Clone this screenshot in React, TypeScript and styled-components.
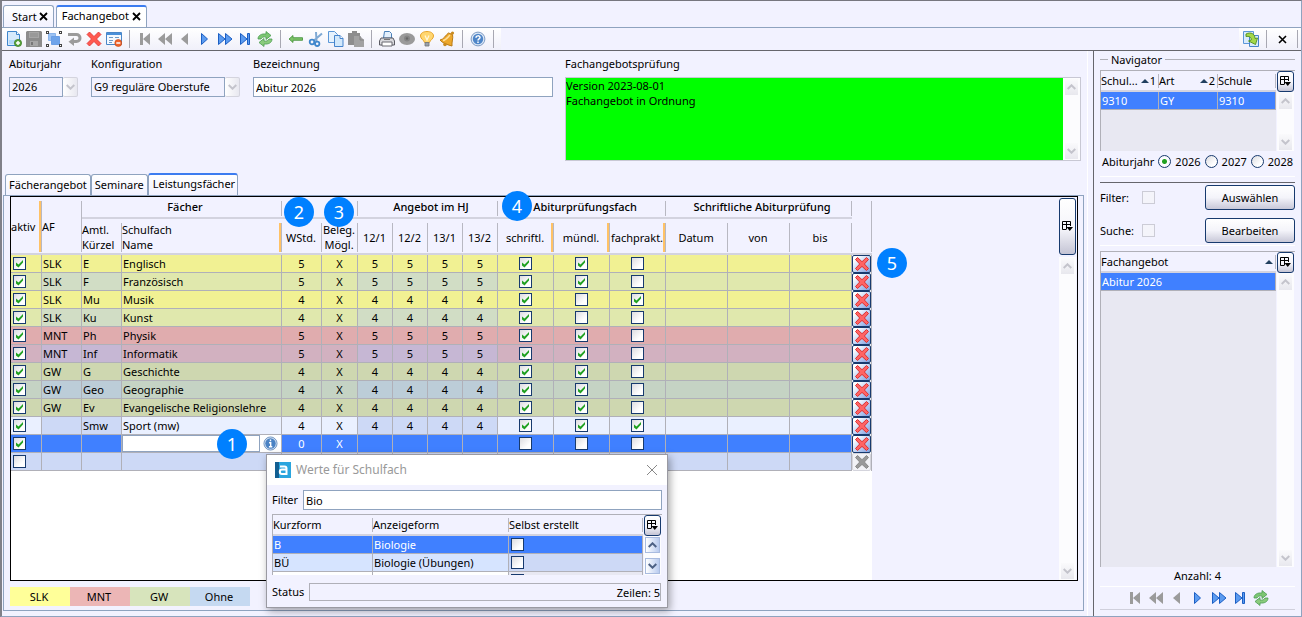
import React from "react";
import styled, { createGlobalStyle, css } from "styled-components";

const Global = createGlobalStyle`
  *, *::before, *::after { box-sizing: border-box; }
  body {
    margin: 0;
    background: #f2f2ff;
    color: #000;
    font: 11px/16px "Noto Sans", "Open Sans", sans-serif;
  }
  button, input, select, textarea { font: inherit; color: inherit; margin: 0; }
  svg { display: block; }
`;

const LINE = "#b0b0b8";
const STEEL = "#8fa3bf";
const NAVY = "#173a6e";
const SELECT = "#4080ff";

/* ---------- page frame ---------- */
const Page = styled.div`
  min-height: 100vh;
  display: flex;
  flex-direction: column;
  border: 1px solid ${STEEL};
  border-top-color: #77777f;
  border-left: 2px solid #808088;
  background: #f2f2ff;
`;
const TabBar = styled.nav`
  display: flex;
  align-items: flex-end;
  gap: 2px;
  height: 27px;
  padding-left: 1px;
  border-bottom: 1px solid ${STEEL};
`;
const Tab = styled.div<{ $active?: boolean }>`
  display: flex;
  align-items: center;
  gap: 2px;
  height: 22px;
  padding: 0 5px 0 8px;
  border: 1px solid ${STEEL};
  border-bottom: 0;
  border-radius: 3px 3px 0 0;
  background: linear-gradient(#fff, #f2f2ff);
  ${(p) =>
    p.$active &&
    css`
      gap: 3px;
      padding: 0 5px 2px 5px;
      border-top: 2px solid #3c7cf0;
      background: #fff;
    `}
`;
const PlainButton = styled.button`
  display: flex;
  align-items: center;
  justify-content: center;
  padding: 0;
  border: 0;
  background: none;
`;
const Toolbar = styled.div`
  display: flex;
  justify-content: space-between;
  height: 23px;
  border-bottom: 1px solid #66666c;
`;
const ToolGroup = styled.div<{ $end?: boolean }>`
  display: flex;
  align-items: center;
  gap: 4px;
  padding: ${(p) => (p.$end ? "0 0 0 4px" : "0 4px")};
  background: linear-gradient(#fff, #f0f0fa);
`;
const ToolButton = styled(PlainButton)`
  width: 16px;
  height: 16px;
`;
const Separator = styled.span`
  width: 1px;
  height: 18px;
  margin: 0 3px 0 3px;
  background: #a8a8b2;
`;
const Body = styled.div`
  flex: 1;
  display: flex;
  gap: 5px;
`;
const Main = styled.main`
  flex: 1;
  min-width: 0;
  display: flex;
  flex-direction: column;
  padding-bottom: 5px;
  border-right: 1px solid #fff;
`;

/* ---------- form ---------- */
const Form = styled.div`
  display: grid;
  grid-template-columns: 70px 150px 300px 1fr;
  gap: 12px;
  padding: 4px 6px 12px 7px;
`;
const Field = styled.div`
  display: flex;
  flex-direction: column;
  align-items: stretch;
  gap: 4px;
`;
const FieldLabel = styled.label`
  line-height: 18px;
`;
const inputLook = css`
  height: 20px;
  padding: 0 2px;
  border: 1px solid ${STEEL};
  border-radius: 0;
  background: #fff;
  outline: 0;
`;
const TextInput = styled.input`
  ${inputLook}
  width: 100%;
  min-width: 0;
`;
const ComboRow = styled.div`
  display: flex;
  padding-right: 1px;
`;
const Combo = styled.select`
  ${inputLook}
  flex: 1;
  min-width: 0;
  appearance: none;
  background: #f2f2ff;
  opacity: 1;
  &:disabled { color: #000; opacity: 1; }
`;
const ComboArrow = styled.span`
  display: grid;
  place-items: center;
  width: 15px;
  height: 20px;
  border: 1px solid #d4d4de;
  border-left: 0;
  border-radius: 2px;
  background: linear-gradient(90deg, #fff, #e8e8f0);
`;
const ReportBox = styled.div`
  display: flex;
  height: 84px;
  border: 1px solid #c8c8d4;
`;
const Report = styled.textarea`
  flex: 1;
  min-width: 0;
  padding: 0;
  border: 0;
  outline: 0;
  resize: none;
  overflow: hidden;
  background: #00ff00;
  line-height: 15px;
`;

/* ---------- scrollbars ---------- */
const ScrollTrack = styled.div<{ $live?: boolean }>`
  flex: none;
  display: flex;
  flex-direction: column;
  justify-content: space-between;
  width: 17px;
  padding: 1px 2px;
  background: #fcfcfe;
  button {
    width: 13px;
    height: 16px;
    background: linear-gradient(#fafafc, #e8e8ee);
  }
  ${(p) =>
    p.$live &&
    css`
      padding: 1px 1px;
      button {
        width: 15px;
        border: 1px solid #a9bbdf;
        background: linear-gradient(90deg, #fff, #b9cbef);
      }
    `}
`;

/* ---------- inner tab panel ---------- */
const InnerTabs = styled(TabBar)`
  height: 23px;
  border-bottom: 0;
  gap: 0;
  margin-bottom: -1px;
  padding-left: 3px;
`;
const InnerTab = styled.button<{ $active?: boolean }>`
  height: 22px;
  padding: 0 3px;
  border: 1px solid ${STEEL};
  border-bottom-color: transparent;
  border-radius: 3px 3px 0 0;
  background: linear-gradient(#fff, #f2f2ff);
  ${(p) =>
    p.$active &&
    css`
      height: 23px;
      padding: 0 2px 2px 4px;
      border-top: 2px solid #3c7cf0;
    `}
`;
const TabPanel = styled.section`
  flex: 1;
  display: flex;
  flex-direction: column;
  gap: 6px;
  margin: 0 3px 0 1px;
  padding: 0 5px 4px 6px;
  border: 1px solid ${STEEL};
`;
const Frame = styled.div`
  position: relative;
  flex: 1;
  display: flex;
  border: 1px solid #000;
`;
const Viewport = styled.div`
  flex: none;
  background: linear-gradient(#f2f2ff, #f2f2ff) 0 0 / 100% 58px no-repeat #fff;
`;
const ScrollSide = styled.div`
  display: flex;
  flex-direction: column;
  align-items: flex-start;
  margin-left: auto;
  padding-top: 1px;
  width: 18px;
  ${ScrollTrack} { flex: 1; margin-top: 2px; }
`;
const ColumnButton = styled(PlainButton)`
  width: 17px;
  height: 21px;
  border: 1px solid ${NAVY};
  border-radius: 3px;
  background: linear-gradient(#fff, #f4f4fa 55%, #c4c4d4);
`;
const TallColumnButton = styled(ColumnButton)`
  height: 57px;
`;

/* ---------- tables ---------- */
const Grid = styled.table`
  table-layout: fixed;
  width: 861px;
  border-collapse: separate;
  border-spacing: 0;
`;
const Th = styled.th<{ $left?: boolean; $mark?: boolean; $top?: boolean; $plain?: boolean }>`
  height: 36px;
  padding: 2px 2px 0 0;
  font-weight: 400;
  line-height: 15px;
  white-space: nowrap;
  text-align: ${(p) => (p.$left ? "left" : "center")};
  border-bottom: 2px solid #d3d3df;
  background-color: #f2f2ff;
  background-image: linear-gradient(#b8b8c2, #b8b8c2),
    linear-gradient(${(p) => (p.$mark ? "#ffc266, #ffc266" : "transparent, transparent")});
  background-size: 1px calc(100% - 5px), 2px calc(100% - 5px);
  background-position: right 0 top 4px, right 1px top 4px;
  background-repeat: no-repeat;
  ${(p) =>
    p.$top &&
    css`
      height: 22px;
      padding: 0 0 1px 6px;
      font-weight: 500;
    `}
`;
const Td = styled.td<{ $bg: string; $center?: boolean; $light?: boolean }>`
  height: 18px;
  padding: 0 1px;
  overflow: hidden;
  line-height: 16px;
  white-space: nowrap;
  text-align: ${(p) => (p.$center ? "center" : "left")};
  color: ${(p) => (p.$light ? "#fff" : "#000")};
  background: ${(p) => p.$bg};
  border-right: 1px solid ${LINE};
  border-bottom: 1px solid ${LINE};
`;
const DeleteCell = styled.td`
  height: 18px;
  padding: 0;
  border-right: 1px solid ${LINE};
`;
const DeleteButton = styled(PlainButton)`
  width: 19px;
  height: 18px;
  border: 1px solid ${NAVY};
  border-radius: 2px;
  background: linear-gradient(135deg, #fff 15%, #b8ccf2 60%, #7f9fdc);
  &:disabled {
    border-color: #d4d4dc;
    background: #f2f2f6;
  }
`;
const EditRow = styled.div`
  display: flex;
  align-items: center;
  margin: 0 -1px;
  background: #fff;
`;
const CellInput = styled.input`
  width: 138px;
  height: 17px;
  padding: 0 2px;
  border: 1px solid ${STEEL};
  background: #fff;
  color: #000;
  outline: 0;
`;
const InfoButton = styled(PlainButton)`
  width: 21px;
  height: 17px;
`;

/* ---------- check boxes and radios ---------- */
const CheckBox = styled.span<{ $center?: boolean }>`
  display: grid;
  width: 13px;
  height: 13px;
  margin: ${(p) => (p.$center ? "0 auto" : "0 0 0 1px")};
  > * { grid-area: 1 / 1; }
  svg { pointer-events: none; }
`;
const CheckInput = styled.input`
  appearance: none;
  width: 13px;
  height: 13px;
  border: 1px solid ${NAVY};
  background: linear-gradient(135deg, #dcdce0, #fff 70%);
  &:disabled { border-color: #ccccd6; background: #f4f4fa; }
`;
const RadioInput = styled.input`
  appearance: none;
  width: 13px;
  height: 13px;
  border: 1px solid ${NAVY};
  border-radius: 50%;
  background: linear-gradient(135deg, #dcdce0, #fff 70%);
  &:checked { background: radial-gradient(circle, #21a121 0 2px, #fff 3px, #f2f2f6); }
`;

/* ---------- legend and badges ---------- */
const Legend = styled.div`
  display: flex;
`;
const LegendItem = styled.span<{ $bg: string }>`
  width: 60px;
  padding-right: 2px;
  line-height: 19px;
  text-align: center;
  background: ${(p) => p.$bg};
`;
const Badge = styled.span<{ $x: number; $y: number }>`
  position: absolute;
  left: ${(p) => p.$x}px;
  top: ${(p) => p.$y}px;
  width: 30px;
  height: 30px;
  border-radius: 50%;
  background: #0080ff;
  color: #fff;
  font-size: 18px;
  line-height: 30px;
  text-align: center;
`;

/* ---------- dialog ---------- */
const Dialog = styled.div`
  position: absolute;
  left: 255px;
  top: 257px;
  width: 402px;
  border: 1px solid #9a9aa2;
  background: #f2f2ff;
  box-shadow: 2px 3px 8px rgba(0, 0, 0, 0.35);
`;
const DialogTitle = styled.header`
  display: flex;
  align-items: center;
  gap: 5px;
  height: 30px;
  padding: 0 9px 0 8px;
  background: #fff;
  color: #999;
  font-size: 12px;
  button { margin-left: auto; }
`;
const DialogBody = styled.div`
  display: flex;
  flex-direction: column;
  gap: 4px;
  padding: 5px 5px 6px;
`;
const DialogRow = styled.div<{ $last?: boolean }>`
  display: flex;
  align-items: center;
  gap: 5px;
  padding: ${(p) => (p.$last ? "4px 1px 0 0" : "0")};
`;
const StatusBox = styled.output`
  flex: 1;
  height: 18px;
  line-height: 18px;
  border: 1px solid ${LINE};
  text-align: right;
`;
const ListBox = styled.div<{ $height?: number; $bg?: string; $grow?: boolean }>`
  display: flex;
  overflow: hidden;
  height: ${(p) => (p.$height ? p.$height + "px" : "auto")};
  flex: ${(p) => (p.$grow ? "1" : "none")};
  border-top: 1px solid ${LINE};
  border-left: 1px solid ${LINE};
`;
const ListArea = styled.div<{ $bg?: string }>`
  flex: 1;
  min-width: 0;
  background: ${(p) => p.$bg ?? "#fff"};
`;
const ListSide = styled.div`
  display: flex;
  flex-direction: column;
  align-items: center;
  width: 19px;
  ${ScrollTrack} { flex: 1; }
`;
const List = styled.table`
  width: 100%;
  table-layout: fixed;
  border-collapse: separate;
  border-spacing: 0;
`;
const ListHead = styled.th`
  height: 21px;
  padding: 0;
  font-weight: 400;
  text-align: left;
  white-space: nowrap;
  border-bottom: 2px solid #d3d3df;
  background: linear-gradient(#b8b8c2, #b8b8c2) right 0 top 3px / 1px 14px no-repeat #f2f2ff;
`;
const HeadSort = styled.span`
  display: flex;
  align-items: center;
  justify-content: space-between;
  padding-right: 3px;
  span { display: flex; align-items: center; gap: 1px; }
`;

/* ---------- navigator ---------- */
const Nav = styled.aside`
  flex: none;
  width: 208px;
  display: flex;
  flex-direction: column;
  padding: 0 6px 6px 6px;
  border-left: 1px solid #66666c;
`;
const NavTitle = styled.h2`
  display: flex;
  align-items: center;
  gap: 3px;
  margin: 0 0 2px;
  font: inherit;
  line-height: 17px;
  &::before, &::after { content: ""; height: 1px; background: ${LINE}; }
  &::before { width: 8px; }
  &::after { flex: 1; }
`;
const RadioRow = styled.div`
  display: flex;
  align-items: center;
  justify-content: space-between;
  height: 26px;
  padding: 0 2px 4px 2px;
  border-bottom: 1px solid #fff;
  label { display: flex; align-items: center; gap: 4px; }
`;
const FilterBlock = styled.div`
  display: flex;
  flex-direction: column;
  gap: 8px;
  margin: 5px 0;
  padding: 2px 0 2px;
  border-top: 1px solid #66666c;
  border-bottom: 1px solid #fff;
`;
const FilterRow = styled.div`
  display: grid;
  grid-template-columns: 41px 1fr 90px;
  align-items: center;
`;
const ActionButton = styled.button`
  height: 25px;
  padding: 0;
  border: 1px solid ${NAVY};
  border-radius: 3px;
  background: linear-gradient(#fff, #f4f4fa 50%, #c8c8d8);
`;
const Count = styled.p`
  margin: 0;
  padding: 1px 0 2px;
  border-bottom: 1px solid #fff;
  text-align: center;
`;
const Pager = styled.div`
  display: flex;
  justify-content: center;
  align-items: center;
  gap: 5px;
  height: 23px;
  border-bottom: 1px solid #d0d0dc;
`;

/* ---------- icons ---------- */
const Chevron = ({ up, color = "#c4c4cc" }: { up?: boolean; color?: string }) => (
  <svg width="9" height="6" viewBox="0 0 9 6">
    <path d={up ? "M0.7 5 4.5 1.3 8.3 5" : "M0.7 1 4.5 4.7 8.3 1"} fill="none" stroke={color} strokeWidth="2" />
  </svg>
);
const SortUp = () => (
  <svg width="8" height="4" viewBox="0 0 8 4"><path d="M0 4 4 0 8 4z" fill="#22405f" /></svg>
);
const CrossIcon = ({ thin }: { thin?: boolean }) => (
  <svg width="9" height="9" viewBox="0 0 9 9">
    <path d="M1 1 8 8M8 1 1 8" stroke="#000" strokeWidth={thin ? 1.6 : 1.8} />
  </svg>
);
const TableMenuIcon = () => (
  <svg width="11" height="11" viewBox="0 0 11 11">
    <path d="M8.500 5V.5H.5v8H4M.5 3.500H8.500M4.500 .5v8" fill="none" stroke="#000" />
    <path d="M4.500 6h6.500L7.750 10z" />
  </svg>
);
const DeleteX = ({ color = "#ff6464", edge = "#dc3030", size = 14 }: { color?: string; edge?: string; size?: number }) => (
  <svg width={size} height={size} viewBox="1 1 14 14">
    <path d="M3.5 1.5 8 5.7 12.5 1.5 14.5 3.5 10.4 8 14.5 12.5 12.5 14.5 8 10.4 3.5 14.5 1.5 12.5 5.7 8 1.5 3.5z" fill={color} stroke={edge} strokeWidth="1" strokeLinejoin="round" />
  </svg>
);
type IconName =
  | "new" | "save" | "frame" | "undo" | "delete" | "form" | "first" | "rewind" | "prev" | "next" | "forward"
  | "last" | "refresh" | "back" | "cut" | "copy" | "paste" | "print" | "eye" | "bulb" | "bell" | "help" | "export";

const GRAY = "#9b9b9b";
const BLUE = { fill: "#5b9bf0", stroke: "#1c5fc4" };
const shapes: Record<IconName, React.ReactNode> = {
  new: (
    <>
      <path d="M1.5 .5h9l3 3v11h-12z" fill="#d6eafc" stroke="#3f86cc" />
      <path d="M10.5 .5v3h3" fill="#fff" stroke="#3f86cc" />
      <path d="M3 9h9v4H3z" fill="#b4d8f8" />
      <circle cx="12" cy="12" r="3.6" fill="#5ba53c" stroke="#377a22" strokeWidth=".7" />
      <path d="M12 10v4M10 12h4" stroke="#fff" strokeWidth="1.5" />
    </>
  ),
  save: (
    <>
      <path d="M1 0h14l1 1v15H0V1z" fill="#8c8c8c" />
      <path d="M3 1h10v6H3zM4 10h8v5H4z" fill="#a6a6a6" />
      <path d="M4 3h8M4 5h8" stroke="#8c8c8c" />
      <path d="M5 11h2v3H5z" fill="#777" />
    </>
  ),
  frame: (
    <>
      <path d="M2.5 2.5h7v7h-7z" fill="#9cc2f2" stroke="#8ab4ec" />
      <path d="M5.500 5.500h8v8h-8z" fill="#6fa4ea" stroke="#6b9fe6" />
      <path d="M0 0h3v3H0zM13 0h3v3h-3zM0 13h3v3H0zM13 13h3v3h-3z" fill="#444" />
      <path d="M1 1h1v1H1zM14 1h1v1h-1zM1 14h1v1H1zM14 14h1v1h-1z" fill="#fff" />
    </>
  ),
  undo: (
    <>
      <path d="M2 3.500h8.500a3.500 3.500 0 0 1 0 7H7" fill="none" stroke={GRAY} strokeWidth="3" />
      <path d="M8 6.500v8.500L2.500 10.700z" fill={GRAY} />
    </>
  ),
  delete: (
    <path d="M3.500 1 8 5.500 12.500 1 15 3.500 10.500 8 15 12.500 12.500 15 8 10.500 3.500 15 1 12.500 5.500 8 1 3.500z" fill="#ff5a50" stroke="#e03030" strokeWidth=".8" />
  ),
  form: (
    <>
      <path d="M.5 1.500h15v12H.5z" fill="#f4f9ff" stroke="#4a86c8" />
      <path d="M1 2h14v2H1z" fill="#4a90d9" />
      <path d="M3 6.500h4M9 6.500h4M3 9.500h4M3 11.500h3" stroke="#6f9cc8" />
      <circle cx="12.300" cy="12" r="3.500" fill="#f0642d" stroke="#c2410c" strokeWidth=".6" />
      <path d="M10.300 12h4" stroke="#fff" strokeWidth="1.500" />
    </>
  ),
  first: <path d="M3 2h3v12H3zM13 2v12L6 8z" fill={GRAY} />,
  rewind: <path d="M8 2v12L1 8zM15 2v12L8 8z" fill={GRAY} />,
  prev: <path d="M11 2v12L4 8z" fill={GRAY} />,
  next: <path d="M4.500 2.500v11L10.500 8z" {...BLUE} />,
  forward: <path d="M1.500 2.500v11L8 8zM8.500 2.500v11L15 8z" {...BLUE} />,
  last: <path d="M3.500 2.500v11L10 8zM10.500 2.500h2v11h-2z" {...BLUE} />,
  refresh: (
    <>
      <path d="M1 8C1 4 5 2.500 9 3V.5l5 4-5 4V6C6 5.500 5 6.500 4 8z" fill="#7cc672" stroke="#4a9c50" strokeWidth=".8" />
      <path d="M15 8c0 4-4 5.500-8 5v2.500l-5-4 5-4V10c3 .5 4-.5 5-2z" fill="#8acb7c" stroke="#4a9c50" strokeWidth=".8" />
    </>
  ),
  back: <path d="M1 8 5 4.500v2.200h9.500v2.600H5v2.200z" fill="#7cc267" stroke="#3f8f35" strokeWidth=".8" />,
  cut: (
    <>
      <path d="M8 1 8.500 10M14 2.500 6 9.500" stroke="#7fa9d4" strokeWidth="2" />
      <circle cx="4" cy="11" r="2.300" fill="none" stroke="#3f86cc" strokeWidth="1.800" />
      <circle cx="9.200" cy="12.800" r="2.200" fill="none" stroke="#3f86cc" strokeWidth="1.800" />
    </>
  ),
  copy: (
    <>
      <path d="M.5 .5h6l3 3v8h-9z" fill="#e6f2fd" stroke="#5b97d8" />
      <path d="M6.500 4.500h5.500l3 3v8H6.500z" fill="#d2e8fb" stroke="#4684cc" />
      <path d="M12 4.500v3h3" fill="#fff" stroke="#4684cc" />
    </>
  ),
  paste: (
    <>
      <path d="M0 2h4V0h5v2h3v12H0z" fill="#8d8d8d" />
      <path d="M6 5h6l4 4v7H6z" fill="#a2a2a2" />
      <path d="M12 5v4h4" fill="none" stroke="#858585" />
    </>
  ),
  print: (
    <>
      <path d="M4.500 7 5.500.5h5l2 2V7z" fill="#e4f0fc" stroke="#4a80b8" />
      <path d="M2 7h12l1.500 3v4H.5v-4z" fill="#d8d8dc" stroke="#5a5a62" />
      <path d="M3 11h10v4H3z" fill="#fff" stroke="#6a6a72" />
      <path d="M5 8.500h6" stroke="#777" />
    </>
  ),
  eye: (
    <>
      <ellipse cx="8" cy="8" rx="8" ry="6" fill="#9a9a9a" />
      <circle cx="8" cy="7.500" r="3" fill="#858585" />
      <circle cx="8" cy="7.500" r="1.200" fill="#666" />
    </>
  ),
  bulb: (
    <>
      <path d="M5.500 11.500C5 9 1.500 8 1.500 5 1.500 2 4.500 .5 8 .5s6.500 1.500 6.500 4.500c0 3-3.500 4-4 6.500z" fill="#ffd670" stroke="#e8a52c" />
      <path d="M6 4.500 8 9l2-4.500" fill="none" stroke="#fff6d8" strokeWidth="1.300" />
      <path d="M6 11.500h4v3.500H6z" fill="#9aa0a8" stroke="#70757c" strokeWidth=".8" />
    </>
  ),
  bell: (
    <>
      <path d="M1 9C5 8.500 6.500 4 9.500 2L13.500 3.500C14.500 7 12.500 11 13 15 9.500 14 3.500 12.500 1 9z" fill="#eda82c" stroke="#b97a14" />
      <path d="M4 9.500C7 9 9 6 11 4" fill="none" stroke="#ffe09a" strokeWidth="1.500" />
      <circle cx="13.500" cy="2" r="1.600" fill="#c88a20" />
      <circle cx="6" cy="13.500" r="1.800" fill="#c88a20" />
    </>
  ),
  help: (
    <>
      <circle cx="8" cy="8" r="6.900" fill="#dce8f6" stroke="#7f9cc4" />
      <circle cx="8" cy="8" r="5.200" fill="#4f86c8" />
      <path d="M6 6.700C6 4.300 10 4.300 10 6.500 10 8 8 7.900 8 9.500M8 10.500v1.500" fill="none" stroke="#fff" strokeWidth="1.500" />
    </>
  ),
  export: (
    <>
      <path d="M.5 .5h10v12H.5z" fill="#d8eafc" stroke="#5b97d8" />
      <path d="M6.500 4.500h9v11h-9z" fill="#d8eafc" stroke="#4684cc" />
      <path d="M3 3C8 .5 12 3 12 7.500l2.500-.5-2 6.500L5.500 10l2.700-1C8.500 6 6 5 3 5.500z" fill="#a4d84a" stroke="#4f8f1c" strokeWidth=".9" />
    </>
  ),
};
const Icon = ({ name }: { name: IconName }) => (
  <svg width="16" height="16" viewBox="0 0 16 16">{shapes[name]}</svg>
);
const InfoIcon = () => (
  <svg width="15" height="15" viewBox="0 0 16 16">
    <circle cx="8" cy="8" r="7" fill="#d5e2f2" stroke="#6e93c2" />
    <circle cx="8" cy="8" r="5.600" fill="#4a82c4" />
    <path d="M8 3.800v1.800M6.500 7.200H8.200v4.200M6.300 11.500h3.600" fill="none" stroke="#fff" strokeWidth="1.500" />
  </svg>
);

/* ---------- small parts ---------- */
const Check = ({ checked, label, center, disabled, id }: { checked?: boolean; label?: string; center?: boolean; disabled?: boolean; id?: string }) => (
  <CheckBox $center={center}>
    <CheckInput id={id} type="checkbox" defaultChecked={checked} aria-label={label} disabled={disabled} />
    {checked && (
      <svg width="13" height="13" viewBox="0 0 13 13">
        <path d="M3 5.500v3L5.500 10.500 10 5.500V3L5.500 7.500z" fill="#21a121" />
      </svg>
    )}
  </CheckBox>
);
const Scrollbar = ({ live }: { live?: boolean }) => (
  <ScrollTrack $live={live}>
    <PlainButton aria-label="Nach oben"><Chevron up color={live ? "#4d6185" : undefined} /></PlainButton>
    <PlainButton aria-label="Nach unten"><Chevron color={live ? "#4d6185" : undefined} /></PlainButton>
  </ScrollTrack>
);
const Tools = ({ names }: { names: IconName[] }) => (
  <>
    {names.map((n) => (
      <ToolButton key={n} aria-label={n}><Icon name={n} /></ToolButton>
    ))}
  </>
);

/* ---------- data ---------- */
type Kind = "SLK" | "MNT" | "GW" | "" | "selected" | "blank";
const palette: Record<Kind, { odd: string; even: string; key: string }> = {
  SLK: { odd: "#f1f193", even: "#e0e8ad", key: "#d1ddc5" },
  MNT: { odd: "#e0acae", even: "#d2b1c0", key: "#c6b7d4" },
  GW: { odd: "#ced7b0", even: "#c5d3c4", key: "#bccdd8" },
  "": { odd: "#eaf0ff", even: "#eaf0ff", key: "#cdd9f6" },
  selected: { odd: SELECT, even: SELECT, key: SELECT },
  blank: { odd: "#cdd9f6", even: "#cdd9f6", key: "#cdd9f6" },
};
const subjects: { kind: Kind; code: string; name: string; hours: string; exam: [boolean, boolean, boolean] }[] = [
  { kind: "SLK", code: "E", name: "Englisch", hours: "5", exam: [true, true, false] },
  { kind: "SLK", code: "F", name: "Französisch", hours: "5", exam: [true, true, false] },
  { kind: "SLK", code: "Mu", name: "Musik", hours: "4", exam: [true, false, true] },
  { kind: "SLK", code: "Ku", name: "Kunst", hours: "4", exam: [true, false, false] },
  { kind: "MNT", code: "Ph", name: "Physik", hours: "5", exam: [true, true, false] },
  { kind: "MNT", code: "Inf", name: "Informatik", hours: "5", exam: [true, true, false] },
  { kind: "GW", code: "G", name: "Geschichte", hours: "4", exam: [true, true, false] },
  { kind: "GW", code: "Geo", name: "Geographie", hours: "4", exam: [true, true, false] },
  { kind: "GW", code: "Ev", name: "Evangelische Religionslehre", hours: "4", exam: [true, true, false] },
  { kind: "", code: "Smw", name: "Sport (mw)", hours: "4", exam: [true, true, true] },
  { kind: "selected", code: "", name: "", hours: "0", exam: [false, false, false] },
  { kind: "blank", code: "", name: "", hours: "", exam: [false, false, false] },
];
const columnWidths = [31, 40, 40, 160, 40, 36, 35, 35, 35, 35, 56, 56, 56, 62, 62, 62, 20];
const examNames = ["schriftlich", "mündlich", "fachpraktisch"];

const SubjectTable = () => (
  <Grid>
    <colgroup>{columnWidths.map((w, i) => <col key={i} width={w} />)}</colgroup>
    <thead>
      <tr>
        <Th rowSpan={2} $left $mark>aktiv</Th>
        <Th rowSpan={2} $left>AF</Th>
        <Th colSpan={2} $top>Fächer</Th>
        <Th colSpan={2} $top />
        <Th colSpan={4} $top>Angebot im HJ</Th>
        <Th colSpan={3} $top>Abiturprüfungsfach</Th>
        <Th colSpan={3} $top>Schriftliche Abiturprüfung</Th>
        <Th rowSpan={2} />
      </tr>
      <tr>
        <Th $left>Amtl.<br />Kürzel</Th>
        <Th $left $mark>Schulfach<br />Name</Th>
        <Th>WStd.</Th>
        <Th>Beleg.<br />Mögl.</Th>
        <Th>12/1</Th>
        <Th>12/2</Th>
        <Th>13/1</Th>
        <Th>13/2</Th>
        <Th $mark>schriftl.</Th>
        <Th $mark>mündl.</Th>
        <Th $mark>fachprakt.</Th>
        <Th>Datum</Th>
        <Th>von</Th>
        <Th>bis</Th>
      </tr>
    </thead>
    <tbody>
      {subjects.map((s, i) => {
        const tone = palette[s.kind];
        const base = i % 2 ? tone.even : tone.odd;
        const key = i % 2 ? tone.key : tone.odd;
        const selected = s.kind === "selected";
        const blank = s.kind === "blank";
        const halfYear = selected || blank ? "" : s.hours;
        return (
          <tr key={i}>
            <Td $bg={base}><Check checked={!blank} label={`${s.name} aktiv`} /></Td>
            <Td $bg={key}>{selected || blank ? "" : s.kind}</Td>
            <Td $bg={key}>{s.code}</Td>
            <Td $bg={base}>
              {selected ? (
                <EditRow>
                  <CellInput aria-label="Schulfach" />
                  <InfoButton aria-label="Werte anzeigen"><InfoIcon /></InfoButton>
                </EditRow>
              ) : s.name}
            </Td>
            <Td $bg={base} $center $light={selected}>{s.hours}</Td>
            <Td $bg={base} $center $light={selected}>{blank ? "" : "X"}</Td>
            {[0, 1, 2, 3].map((n) => <Td key={n} $bg={key} $center>{halfYear}</Td>)}
            {s.exam.map((on, n) => (
              <Td key={n} $bg={base} $center>
                {!blank && <Check center checked={on} label={`${s.name} ${examNames[n]}`} />}
              </Td>
            ))}
            <Td $bg={base} />
            <Td $bg={base} />
            <Td $bg={base} />
            <DeleteCell>
              <DeleteButton aria-label="Zeile löschen" disabled={blank}>
                {blank ? <DeleteX color="#999" edge="#8a8a8a" /> : <DeleteX />}
              </DeleteButton>
            </DeleteCell>
          </tr>
        );
      })}
    </tbody>
  </Grid>
);

const ValueDialog = () => (
  <Dialog role="dialog" aria-label="Werte für Schulfach">
    <DialogTitle>
      <svg width="16" height="16" viewBox="0 0 16 16">
        <path d="M0 0h16v16H0z" fill="#2aa5de" />
        <path d="M0 0h4v16H0z" fill="#125f92" />
        <path d="M5 4.500h4.500a2 2 0 0 1 2 2V12H7a2.200 2.200 0 0 1 0-4.400h4" fill="none" stroke="#fff" strokeWidth="2" />
      </svg>
      <span>Werte für Schulfach</span>
      <PlainButton aria-label="Schließen">
        <svg width="12" height="12" viewBox="0 0 12 12"><path d="M1 1 11 11M11 1 1 11" stroke="#888" /></svg>
      </PlainButton>
    </DialogTitle>
    <DialogBody>
      <DialogRow>
        <label htmlFor="value-filter">Filter</label>
        <TextInput id="value-filter" defaultValue="Bio" />
      </DialogRow>
      <ListBox $height={61}>
        <ListArea>
          <List>
            <colgroup><col width="100" /><col width="136" /><col /></colgroup>
            <thead>
              <tr><ListHead>Kurzform</ListHead><ListHead>Anzeigeform</ListHead><ListHead>Selbst erstellt</ListHead></tr>
            </thead>
            <tbody>
              <tr>
                <Td $bg={SELECT} $light>B</Td>
                <Td $bg={SELECT} $light>Biologie</Td>
                <Td $bg={SELECT}><Check label="Biologie selbst erstellt" /></Td>
              </tr>
              <tr>
                <Td $bg="#d6e4ff">BÜ</Td>
                <Td $bg="#d6e4ff">Biologie (Übungen)</Td>
                <Td $bg="#cdd9f6"><Check label="Biologie (Übungen) selbst erstellt" /></Td>
              </tr>
              <tr>
                <Td $bg="#fff" />
                <Td $bg="#fff" />
                <Td $bg="#e8e8f2"><Check label="Selbst erstellt" /></Td>
              </tr>
            </tbody>
          </List>
        </ListArea>
        <ListSide>
          <ColumnButton aria-label="Spalten"><TableMenuIcon /></ColumnButton>
          <Scrollbar live />
        </ListSide>
      </ListBox>
      <DialogRow $last>
        <span>Status</span>
        <StatusBox>Zeilen: 5</StatusBox>
      </DialogRow>
    </DialogBody>
  </Dialog>
);

const Navigator = () => (
  <Nav>
    <NavTitle>Navigator</NavTitle>
    <ListBox $height={81}>
      <ListArea $bg="#e8e8f2">
        <List>
          <colgroup><col width="58" /><col width="59" /><col /></colgroup>
          <thead>
            <tr>
              <ListHead><HeadSort>Schul...<span><SortUp />1</span></HeadSort></ListHead>
              <ListHead><HeadSort>Art<span><SortUp />2</span></HeadSort></ListHead>
              <ListHead>Schule</ListHead>
            </tr>
          </thead>
          <tbody>
            <tr>
              <Td $bg={SELECT} $light>9310</Td>
              <Td $bg={SELECT} $light>GY</Td>
              <Td $bg={SELECT} $light>9310</Td>
            </tr>
          </tbody>
        </List>
      </ListArea>
      <ListSide>
        <ColumnButton aria-label="Spalten"><TableMenuIcon /></ColumnButton>
        <Scrollbar />
      </ListSide>
    </ListBox>
    <RadioRow role="radiogroup" aria-label="Abiturjahr">
      <span>Abiturjahr</span>
      {["2026", "2027", "2028"].map((y, i) => (
        <label key={y}><RadioInput type="radio" name="year" defaultChecked={i === 0} />{y}</label>
      ))}
    </RadioRow>
    <FilterBlock>
      <FilterRow>
        <label htmlFor="nav-filter">Filter:</label>
        <Check id="nav-filter" disabled />
        <ActionButton>Auswählen</ActionButton>
      </FilterRow>
      <FilterRow>
        <label htmlFor="nav-search">Suche:</label>
        <Check id="nav-search" disabled />
        <ActionButton>Bearbeiten</ActionButton>
      </FilterRow>
    </FilterBlock>
    <ListBox $grow>
      <ListArea $bg="#e8e8f2">
        <List>
          <thead>
            <tr><ListHead><HeadSort>Fachangebot<span><SortUp /></span></HeadSort></ListHead></tr>
          </thead>
          <tbody>
            <tr><Td $bg={SELECT} $light>Abitur 2026</Td></tr>
          </tbody>
        </List>
      </ListArea>
      <ListSide>
        <ColumnButton aria-label="Spalten"><TableMenuIcon /></ColumnButton>
        <Scrollbar />
      </ListSide>
    </ListBox>
    <Count>Anzahl: 4</Count>
    <Pager><Tools names={["first", "rewind", "prev", "next", "forward", "last", "refresh"]} /></Pager>
  </Nav>
);

export default function App() {
  return (
    <>
      <Global />
      <Page>
        <TabBar>
          <Tab>Start<PlainButton aria-label="Start schließen"><CrossIcon /></PlainButton></Tab>
          <Tab $active>Fachangebot<PlainButton aria-label="Fachangebot schließen"><CrossIcon /></PlainButton></Tab>
        </TabBar>
        <Toolbar>
          <ToolGroup>
            <Tools names={["new", "save", "frame", "undo", "delete", "form"]} />
            <Separator />
            <Tools names={["first", "rewind", "prev", "next", "forward", "last", "refresh"]} />
            <Separator />
            <Tools names={["back", "cut", "copy", "paste"]} />
            <Separator />
            <Tools names={["print", "eye", "bulb", "bell"]} />
            <Separator />
            <Tools names={["help"]} />
            <Separator />
          </ToolGroup>
          <ToolGroup $end>
            <Tools names={["export"]} />
            <Separator />
            <ToolButton aria-label="Schließen"><CrossIcon thin /></ToolButton>
            <Separator />
          </ToolGroup>
        </Toolbar>
        <Body>
          <Main>
            <Form>
              <Field>
                <FieldLabel htmlFor="year">Abiturjahr</FieldLabel>
                <ComboRow>
                  <Combo id="year" disabled><option>2026</option></Combo>
                  <ComboArrow><Chevron /></ComboArrow>
                </ComboRow>
              </Field>
              <Field>
                <FieldLabel htmlFor="config">Konfiguration</FieldLabel>
                <ComboRow>
                  <Combo id="config" disabled><option>G9 reguläre Oberstufe</option></Combo>
                  <ComboArrow><Chevron /></ComboArrow>
                </ComboRow>
              </Field>
              <Field>
                <FieldLabel htmlFor="title">Bezeichnung</FieldLabel>
                <TextInput id="title" defaultValue="Abitur 2026" />
              </Field>
              <Field>
                <FieldLabel htmlFor="report">Fachangebotsprüfung</FieldLabel>
                <ReportBox>
                  <Report id="report" readOnly value={"Version 2023-08-01\nFachangebot in Ordnung"} />
                  <Scrollbar />
                </ReportBox>
              </Field>
            </Form>
            <InnerTabs>
              <InnerTab>Fächerangebot</InnerTab>
              <InnerTab>Seminare</InnerTab>
              <InnerTab $active>Leistungsfächer</InnerTab>
            </InnerTabs>
            <TabPanel>
              <Frame>
                <Viewport><SubjectTable /></Viewport>
                <ScrollSide>
                  <TallColumnButton aria-label="Spalten"><TableMenuIcon /></TallColumnButton>
                  <Scrollbar />
                </ScrollSide>
                <Badge $x={206} $y={232}>1</Badge>
                <Badge $x={273} $y={0}>2</Badge>
                <Badge $x={313} $y={0}>3</Badge>
                <Badge $x={491} $y={-6}>4</Badge>
                <Badge $x={866} $y={51}>5</Badge>
                <ValueDialog />
              </Frame>
              <Legend>
                <LegendItem $bg="#ffff99">SLK</LegendItem>
                <LegendItem $bg="#ecb6b6">MNT</LegendItem>
                <LegendItem $bg="#d7e4bc">GW</LegendItem>
                <LegendItem $bg="#c5d9f1">Ohne</LegendItem>
              </Legend>
            </TabPanel>
          </Main>
          <Navigator />
        </Body>
      </Page>
    </>
  );
}
